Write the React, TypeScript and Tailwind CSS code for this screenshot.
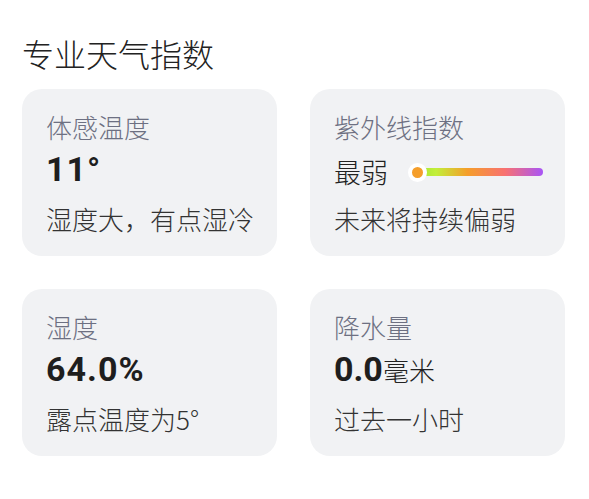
const cjk = { fontFamily: '"Noto Sans CJK SC", "Noto Sans", sans-serif' };
const num = { fontFamily: 'Roboto, "Noto Sans CJK SC", sans-serif' };

function Card({ label, children, desc }: { label: string; children: React.ReactNode; desc: string }) {
  return (
    <div className="h-[167px] rounded-[20px] bg-[#f1f2f4] pl-6 pt-[22px]">
      <div className="text-[26px] font-light leading-[32px] text-[#6d7082]">{label}</div>
      <div className="mt-[6px] flex h-[40px] items-center">{children}</div>
      <div className="mt-[14px] text-[26px] font-light leading-[32px] text-[#333]">{desc}</div>
    </div>
  );
}

export default function App() {
  return (
    <div className="h-[499px] w-[589px] bg-white px-[22px] pt-[33px]" style={cjk}>
      <h1 className="text-[32px] font-light leading-[40px] text-[#222]">专业天气指数</h1>
      <div className="mt-[16px] grid grid-cols-2 gap-x-[33px] gap-y-[33px] pr-[2px]">
        <Card label="体感温度" desc="湿度大，有点湿冷">
          <span className="text-[34px] font-bold tracking-[1px] text-[#1e1e1e]" style={num}>11°</span>
        </Card>
        <Card label="紫外线指数" desc="未来将持续偏弱">
          <div className="flex translate-y-[3px] items-center">
            <span className="text-[27px] font-light text-[#222]">最弱</span>
            <div className="relative ml-[29px] h-[8px] w-[126px] rounded-full bg-[linear-gradient(90deg,#a3e635_0%,#c2ef3a_15%,#f59e2a_40%,#f87171_70%,#a855f7_100%)]">
              <div className="absolute -left-[9px] -top-[5px] h-[19px] w-[19px] rounded-full border-4 border-white bg-[#f59e2a]" />
            </div>
          </div>
        </Card>
        <Card label="湿度" desc="露点温度为5°">
          <span className="text-[34px] font-bold tracking-[1px] text-[#1e1e1e]" style={num}>64.0%</span>
        </Card>
        <Card label="降水量" desc="过去一小时">
          <span className="text-[34px] font-bold text-[#1e1e1e]" style={num}>0.0</span>
          <span className="text-[26px] font-light text-[#222]">毫米</span>
        </Card>
      </div>
    </div>
  );
}
